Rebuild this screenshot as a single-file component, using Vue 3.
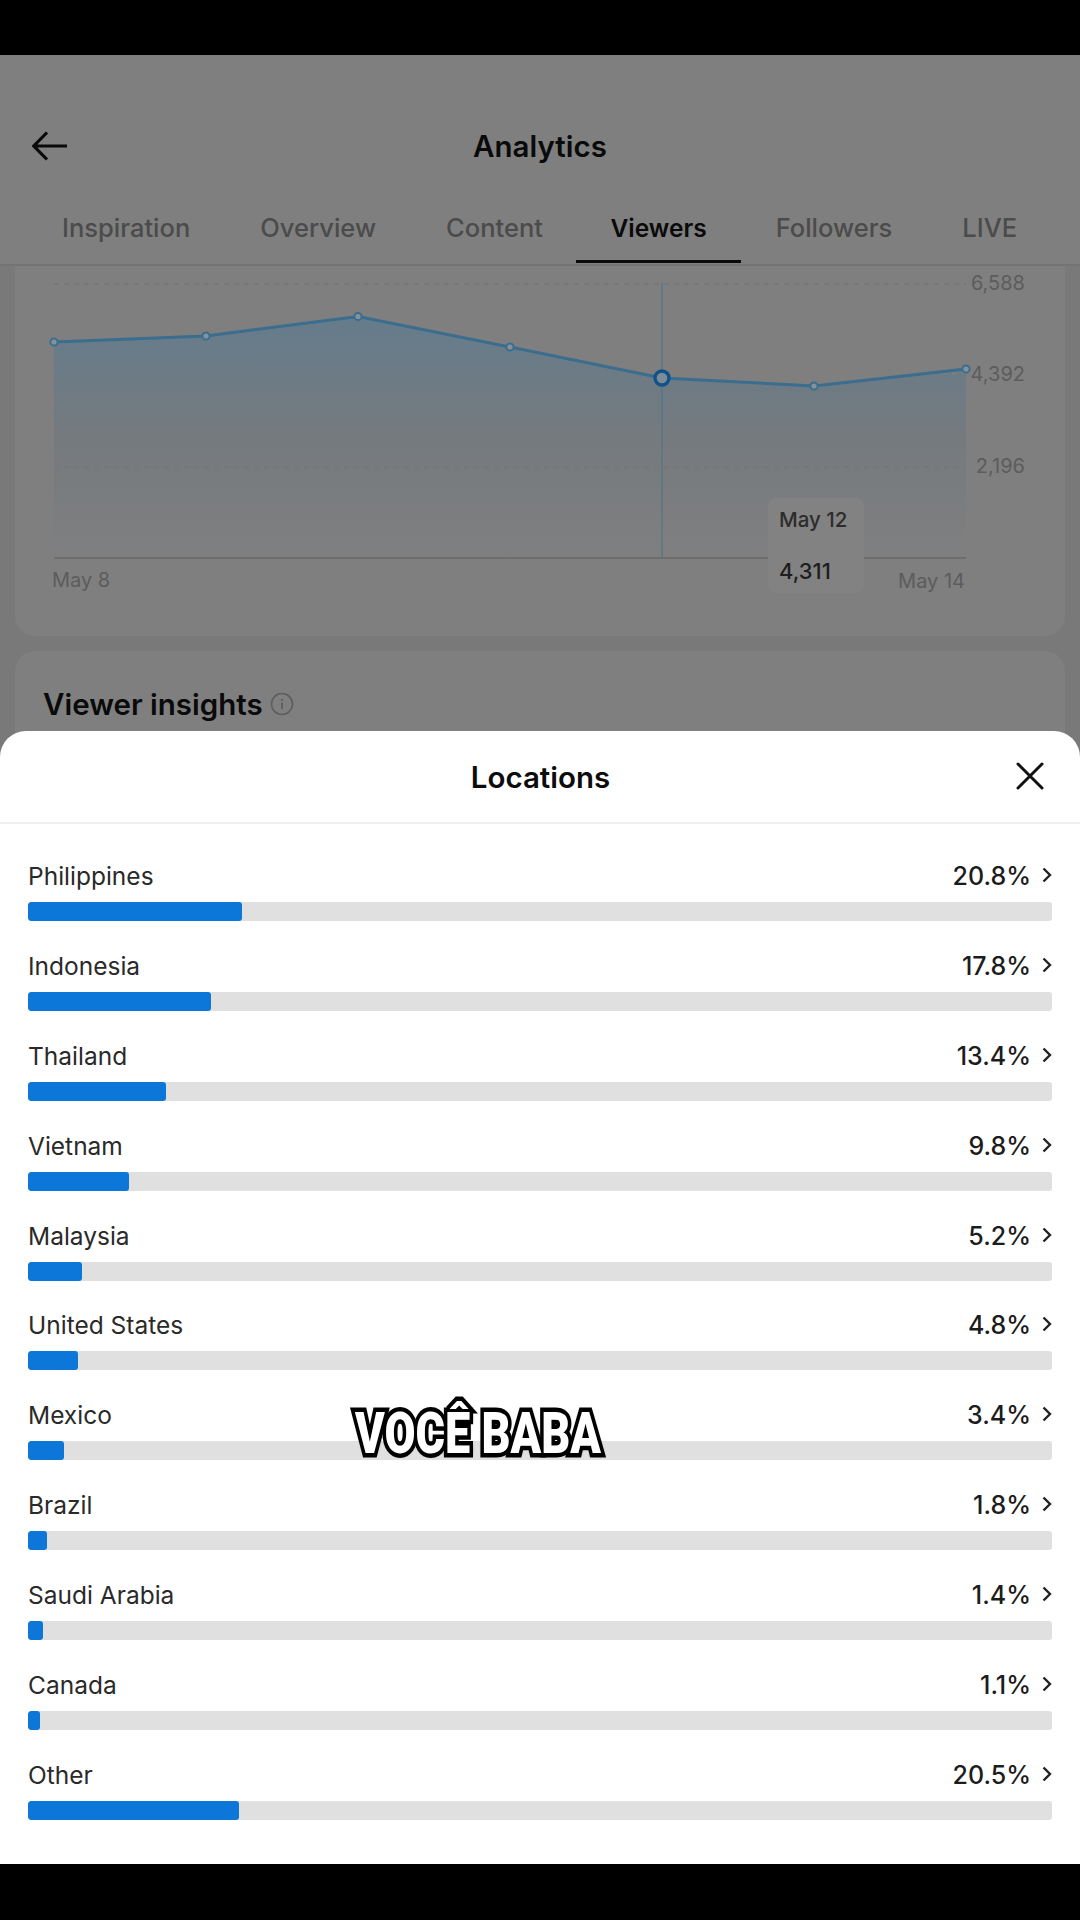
<script setup>
const tabs = ['Inspiration', 'Overview', 'Content', 'Viewers', 'Followers', 'LIVE'];

const points = [
  [54, 341],
  [206, 335],
  [358, 315.5],
  [510, 346],
  [662, 377],
  [814, 385],
  [966, 368],
];
const linePoints = points.map((p) => p.join(',')).join(' ');
const areaPoints = `54,557 ${linePoints} 966,557`;

const locations = [
  { name: 'Philippines', pct: 20.8 },
  { name: 'Indonesia', pct: 17.8 },
  { name: 'Thailand', pct: 13.4 },
  { name: 'Vietnam', pct: 9.8 },
  { name: 'Malaysia', pct: 5.2 },
  { name: 'United States', pct: 4.8 },
  { name: 'Mexico', pct: 3.4 },
  { name: 'Brazil', pct: 1.8 },
  { name: 'Saudi Arabia', pct: 1.4 },
  { name: 'Canada', pct: 1.1 },
  { name: 'Other', pct: 20.5 },
];
</script>

<template>
  <div class="frame">
    <div class="screen">
      <!-- dimmed page behind the sheet -->
      <div class="nav">
        <svg class="back" width="36" height="30" viewBox="0 0 36 30">
          <path d="M35 15H2M15 1.5 1.8 15 15 28.5" fill="none" stroke="#0a0a0a" stroke-width="3.2" />
        </svg>
        <span class="nav-title">Analytics</span>
      </div>
      <div class="tabs">
        <span v-for="tab in tabs" :key="tab" :class="{ tab: true, active: tab === 'Viewers' }">{{ tab }}</span>
      </div>

      <div class="card chart-card">
        <svg class="chart" width="1050" height="370" viewBox="15 265 1050 370">
          <defs>
            <linearGradient id="area" x1="0" y1="0" x2="0" y2="1">
              <stop offset="0" stop-color="#657c8c" />
              <stop offset="0.5" stop-color="#757a7e" />
              <stop offset="1" stop-color="#7f7f80" />
            </linearGradient>
          </defs>
          <line x1="54" y1="283" x2="966" y2="283" class="grid" />
          <polygon :points="areaPoints" fill="url(#area)" />
          <line x1="662" y1="372" x2="966" y2="372" class="grid grid-warm" />
          <line x1="54" y1="466" x2="966" y2="466" class="grid" />
          <line x1="54" y1="557" x2="966" y2="557" stroke="#6e6e6e" stroke-width="2" />
          <line x1="662" y1="282" x2="662" y2="558" stroke="#4f7088" stroke-width="1" />
          <polyline :points="linePoints" fill="none" stroke="#3b6d8e" stroke-width="3" />
          <circle
            v-for="p in points"
            :key="p[0]"
            :cx="p[0]"
            :cy="p[1]"
            r="3.6"
            fill="#85929c"
            stroke="#3b6d8e"
            stroke-width="2"
          />
          <circle cx="662" cy="377" r="7" fill="#7d8b96" stroke="#10528c" stroke-width="3.4" />
          <text x="1025" y="289" text-anchor="end" class="axis">6,588</text>
          <text x="1025" y="380" text-anchor="end" class="axis">4,392</text>
          <text x="1025" y="472" text-anchor="end" class="axis">2,196</text>
          <text x="52" y="586" class="axis">May 8</text>
          <text x="965" y="587" text-anchor="end" class="axis">May 14</text>
        </svg>
        <div class="tooltip">
          <span class="tip-date">May 12</span>
          <span class="tip-value">4,311</span>
        </div>
      </div>

      <div class="card insights-card">
        <span class="insights-title">Viewer insights</span>
        <svg width="24" height="24" viewBox="0 0 24 24" class="info">
          <circle cx="12" cy="12" r="10.5" fill="none" stroke="#5e5e5e" stroke-width="1.6" />
          <path d="M12 10.5v6.5M12 7v1.8" stroke="#5e5e5e" stroke-width="1.8" />
        </svg>
      </div>

      <!-- bottom sheet -->
      <div class="sheet">
        <div class="sheet-head">
          <span class="sheet-title">Locations</span>
          <svg class="close" width="28" height="28" viewBox="0 0 28 28">
            <path d="M2 2 26 26M26 2 2 26" stroke="#111" stroke-width="3" stroke-linecap="round" />
          </svg>
        </div>
        <div class="rows">
          <div v-for="loc in locations" :key="loc.name" class="row">
            <div class="row-top">
              <span class="row-name">{{ loc.name }}</span>
              <span class="row-value">{{ loc.pct }}%</span>
              <svg class="chev" width="10" height="16" viewBox="0 0 10 16">
                <path d="M1.5 1.5 8 8 1.5 14.5" fill="none" stroke="#222" stroke-width="2.4" />
              </svg>
            </div>
            <div class="track">
              <div class="fill" :style="{ width: `calc(${loc.pct}% + 1px)` }"></div>
            </div>
          </div>
        </div>
      </div>

      <div class="caption">VOCÊ BABA</div>
    </div>
  </div>
</template>

<style scoped>
.frame {
  width: 1080px;
  height: 1920px;
  background: #000;
  padding-top: 55px;
  box-sizing: border-box;
  font-family: Inter, "Liberation Sans", sans-serif;
}

.screen {
  position: relative;
  width: 1080px;
  height: 1809px;
  background: #797979;
  overflow: hidden;
}

.nav {
  position: relative;
  height: 60px;
  padding-top: 61px;
  background: #7f7f7f;
  display: flex;
  justify-content: center;
  align-items: center;
}

.back {
  position: absolute;
  left: 32px;
  top: 76px;
}

.nav-title {
  font-size: 29.5px;
  font-weight: 600;
  color: #0a0a0a;
}

.tabs {
  display: flex;
  padding: 34px 0 0 27px;
  height: 54px;
  background: #7f7f7f;
  border-bottom: 2px solid #747474;
  white-space: nowrap;
}

.tab {
  height: 50px;
  line-height: 36px;
  padding: 0 35px;
  font-size: 25.5px;
  font-weight: 500;
  color: #4b4b4b;
  box-sizing: border-box;
}

.tab.active {
  color: #0a0a0a;
  font-size: 24.5px;
  font-weight: 600;
  height: 53px;
  margin-left: -1.5px;
  padding: 0 34px 14px;
  border-bottom: 3px solid #0a0a0a;
}

.card {
  margin: 0 15px;
  background: #7f7f7f;
}

.chart-card {
  position: relative;
  height: 370px;
  border-radius: 0 0 20px 20px;
}

.chart {
  display: block;
}

.grid {
  stroke: #777777;
  stroke-width: 1.5;
  stroke-dasharray: 5 5;
}

.grid-warm {
  stroke: #86807a;
}

.axis {
  font-size: 20px;
  fill: #5c5c5c;
  font-family: Inter, "Liberation Sans", sans-serif;
}

.tooltip {
  position: absolute;
  left: 753px;
  top: 232px;
  width: 96px;
  height: 95px;
  background: #828282;
  border-radius: 8px;
  display: flex;
  flex-direction: column;
  padding-left: 11px;
  box-sizing: border-box;
  font-size: 20.5px;
  font-weight: 500;
}

.tip-date {
  margin-top: 10px;
  line-height: 24px;
  color: #2c2c2c;
}

.tip-value {
  margin-top: 27px;
  line-height: 24px;
  font-size: 22px;
  color: #1e1e1e;
}

.insights-card {
  margin-top: 15px;
  height: 120px;
  border-radius: 20px 20px 0 0;
  padding: 35px 0 0 28px;
  box-sizing: border-box;
  display: flex;
  align-items: flex-start;
  gap: 7px;
}

.insights-title {
  font-size: 29.5px;
  font-weight: 600;
  line-height: 36px;
  color: #0a0a0a;
}

.info {
  margin-top: 6px;
}

.sheet {
  position: absolute;
  left: 0;
  right: 0;
  bottom: 0;
  height: 1133px;
  background: #fff;
  border-radius: 26px 26px 0 0;
}

.sheet-head {
  position: relative;
  height: 91px;
  border-bottom: 2px solid #efefef;
  display: flex;
  justify-content: center;
  align-items: center;
}

.sheet-title {
  font-size: 29.5px;
  font-weight: 600;
  color: #0c0c0c;
  margin-top: 1px;
  margin-left: 1px;
}

.close {
  position: absolute;
  right: 36px;
  top: 31px;
}

.rows {
  padding: 33px 28px 0;
  display: flex;
  flex-direction: column;
  gap: 25.9px;
}

.row-top {
  display: flex;
  align-items: center;
  height: 36px;
  margin-bottom: 9px;
}

.row-name {
  flex: 1;
  padding-top: 2px;
  font-size: 24.5px;
  color: #2a2a2a;
}

.row-value {
  padding-top: 2px;
  font-size: 25px;
  font-weight: 500;
  color: #1c1c1c;
}

.chev {
  margin-left: 11px;
}

.track {
  height: 19px;
  background: #e0e0e0;
  border-radius: 3px;
  overflow: hidden;
}

.fill {
  height: 100%;
  background: #0c77d8;
  border-radius: 3px;
}

.caption {
  position: absolute;
  left: 228px;
  top: 1344px;
  width: 500px;
  text-align: center;
  font-family: Roboto, "Liberation Sans", sans-serif;
  font-size: 57px;
  font-weight: 900;
  line-height: 70px;
  color: #fff;
  -webkit-text-stroke: 9px #000;
  paint-order: stroke fill;
  text-shadow: 0 0 5px #000, 1px 1px 4px #000;
  transform: scaleX(0.79);
  white-space: nowrap;
}
</style>
